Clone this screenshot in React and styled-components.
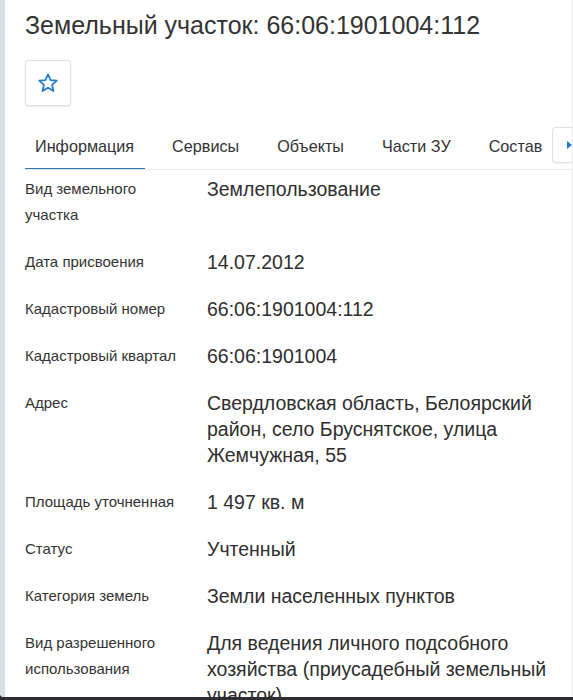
import React from 'react';
import styled, { createGlobalStyle } from 'styled-components';

const GlobalStyle = createGlobalStyle`
  html, body {
    margin: 0;
    padding: 0;
    background: #2c2c31;
  }
  body {
    font-family: "Liberation Sans", Arial, sans-serif;
    color: #333;
    overflow: hidden;
  }
`;

const fields = [
  { label: 'Вид земельного участка', value: 'Землепользование' },
  { label: 'Дата присвоения', value: '14.07.2012' },
  { label: 'Кадастровый номер', value: '66:06:1901004:112' },
  { label: 'Кадастровый квартал', value: '66:06:1901004' },
  { label: 'Адрес', value: 'Свердловская область, Белоярский район, село Бруснятское, улица Жемчужная, 55' },
  { label: 'Площадь уточненная', value: '1 497 кв. м' },
  { label: 'Статус', value: 'Учтенный' },
  { label: 'Категория земель', value: 'Земли населенных пунктов' },
  { label: 'Вид разрешенного использования', value: 'Для ведения личного подсобного хозяйства (приусадебный земельный участок)' },
];

const tabs = ['Информация', 'Сервисы', 'Объекты', 'Части ЗУ', 'Состав'];

const App = () => {
  return (
    <>
      <GlobalStyle />
      <Screen>
        <Frame>
          <Rail />
          <Card>
            <Title>Земельный участок: 66:06:1901004:112</Title>
            <FavButton type="button">
              <svg width="22" height="22" viewBox="0 0 24 24" fill="none" stroke="#1f7ad3" strokeWidth="1.9" strokeLinejoin="round">
                <polygon points="12,2.6 14.8,8.9 21.6,9.5 16.4,14 18,20.7 12,17.1 6,20.7 7.6,14 2.4,9.5 9.2,8.9" />
              </svg>
            </FavButton>
            <TabBar>
              <TabList>
                {tabs.map((t, i) => (
                  <Tab key={t} active={i === 0}>{t}</Tab>
                ))}
              </TabList>
              <ScrollButton type="button">
                <svg width="8" height="10" viewBox="0 0 8 10">
                  <polygon points="2,1 7,5 2,9" fill="#1f7ad3" />
                </svg>
              </ScrollButton>
            </TabBar>
            <Fields>
              {fields.map((f) => (
                <Row key={f.label}>
                  <Label>{f.label}</Label>
                  <Value>{f.value}</Value>
                </Row>
              ))}
            </Fields>
          </Card>
        </Frame>
      </Screen>
    </>
  );
};

export default App;

const Screen = styled.div`
  height: 700px;
  overflow: hidden;
`;

const Frame = styled.div`
  display: flex;
  height: 697px;
  background: #fff;
  border-bottom-left-radius: 4px;
  overflow: hidden;
`;

const Rail = styled.div`
  width: 5px;
  flex-shrink: 0;
  background: #d6dee8;
`;

const Card = styled.div`
  flex: 1;
  min-width: 0;
  padding-left: 20px;
  overflow: hidden;
  border-right: 1px solid #ececec;
`;

const Title = styled.h1`
  margin: 0;
  padding-top: 9px;
  font-size: 25px;
  line-height: 32px;
  font-weight: 400;
  color: #333;
  white-space: nowrap;
`;

const FavButton = styled.button`
  margin-top: 19px;
  width: 46px;
  height: 46px;
  display: grid;
  place-items: center;
  padding: 0;
  background: #fff;
  border: 1px solid #dcdfe3;
  border-radius: 3px;
  box-shadow: 0 1px 2px rgba(0, 0, 0, 0.08);
  cursor: pointer;
`;

const TabBar = styled.div`
  margin-top: 21px;
  display: flex;
  align-items: flex-start;
  border-bottom: 1px solid #e9e9e9;
`;

const TabList = styled.div`
  display: flex;
  gap: 17px;
  overflow: hidden;
  flex: 1;
  min-width: 0;
`;

const Tab = styled.div`
  padding: 0 11px 0 10px;
  height: 41px;
  line-height: 38px;
  font-size: 16.2px;
  color: #333;
  white-space: nowrap;
  border-bottom: 2px solid ${(p) => (p.active ? '#2a76b4' : 'transparent')};
  margin-bottom: -1px;
`;

const ScrollButton = styled.button`
  width: 28px;
  height: 36px;
  margin-right: -8px;
  flex-shrink: 0;
  display: grid;
  place-items: center;
  padding: 0 0 0 4px;
  background: #fff;
  border: 1px solid #dde1e5;
  border-right: none;
  border-radius: 4px 0 0 4px;
  box-shadow: 0 1px 2px rgba(0, 0, 0, 0.06);
`;

const Fields = styled.div`
  padding-top: 6px;
  display: flex;
  flex-direction: column;
  gap: 21px;
`;

const Row = styled.div`
  display: grid;
  grid-template-columns: 182px 1fr;
  padding-right: 11px;
`;

const Label = styled.div`
  font-size: 15px;
  line-height: 26px;
  color: #333;
  padding-right: 20px;
`;

const Value = styled.div`
  font-size: 19.5px;
  line-height: 26px;
  color: #2e2e2e;
`;
